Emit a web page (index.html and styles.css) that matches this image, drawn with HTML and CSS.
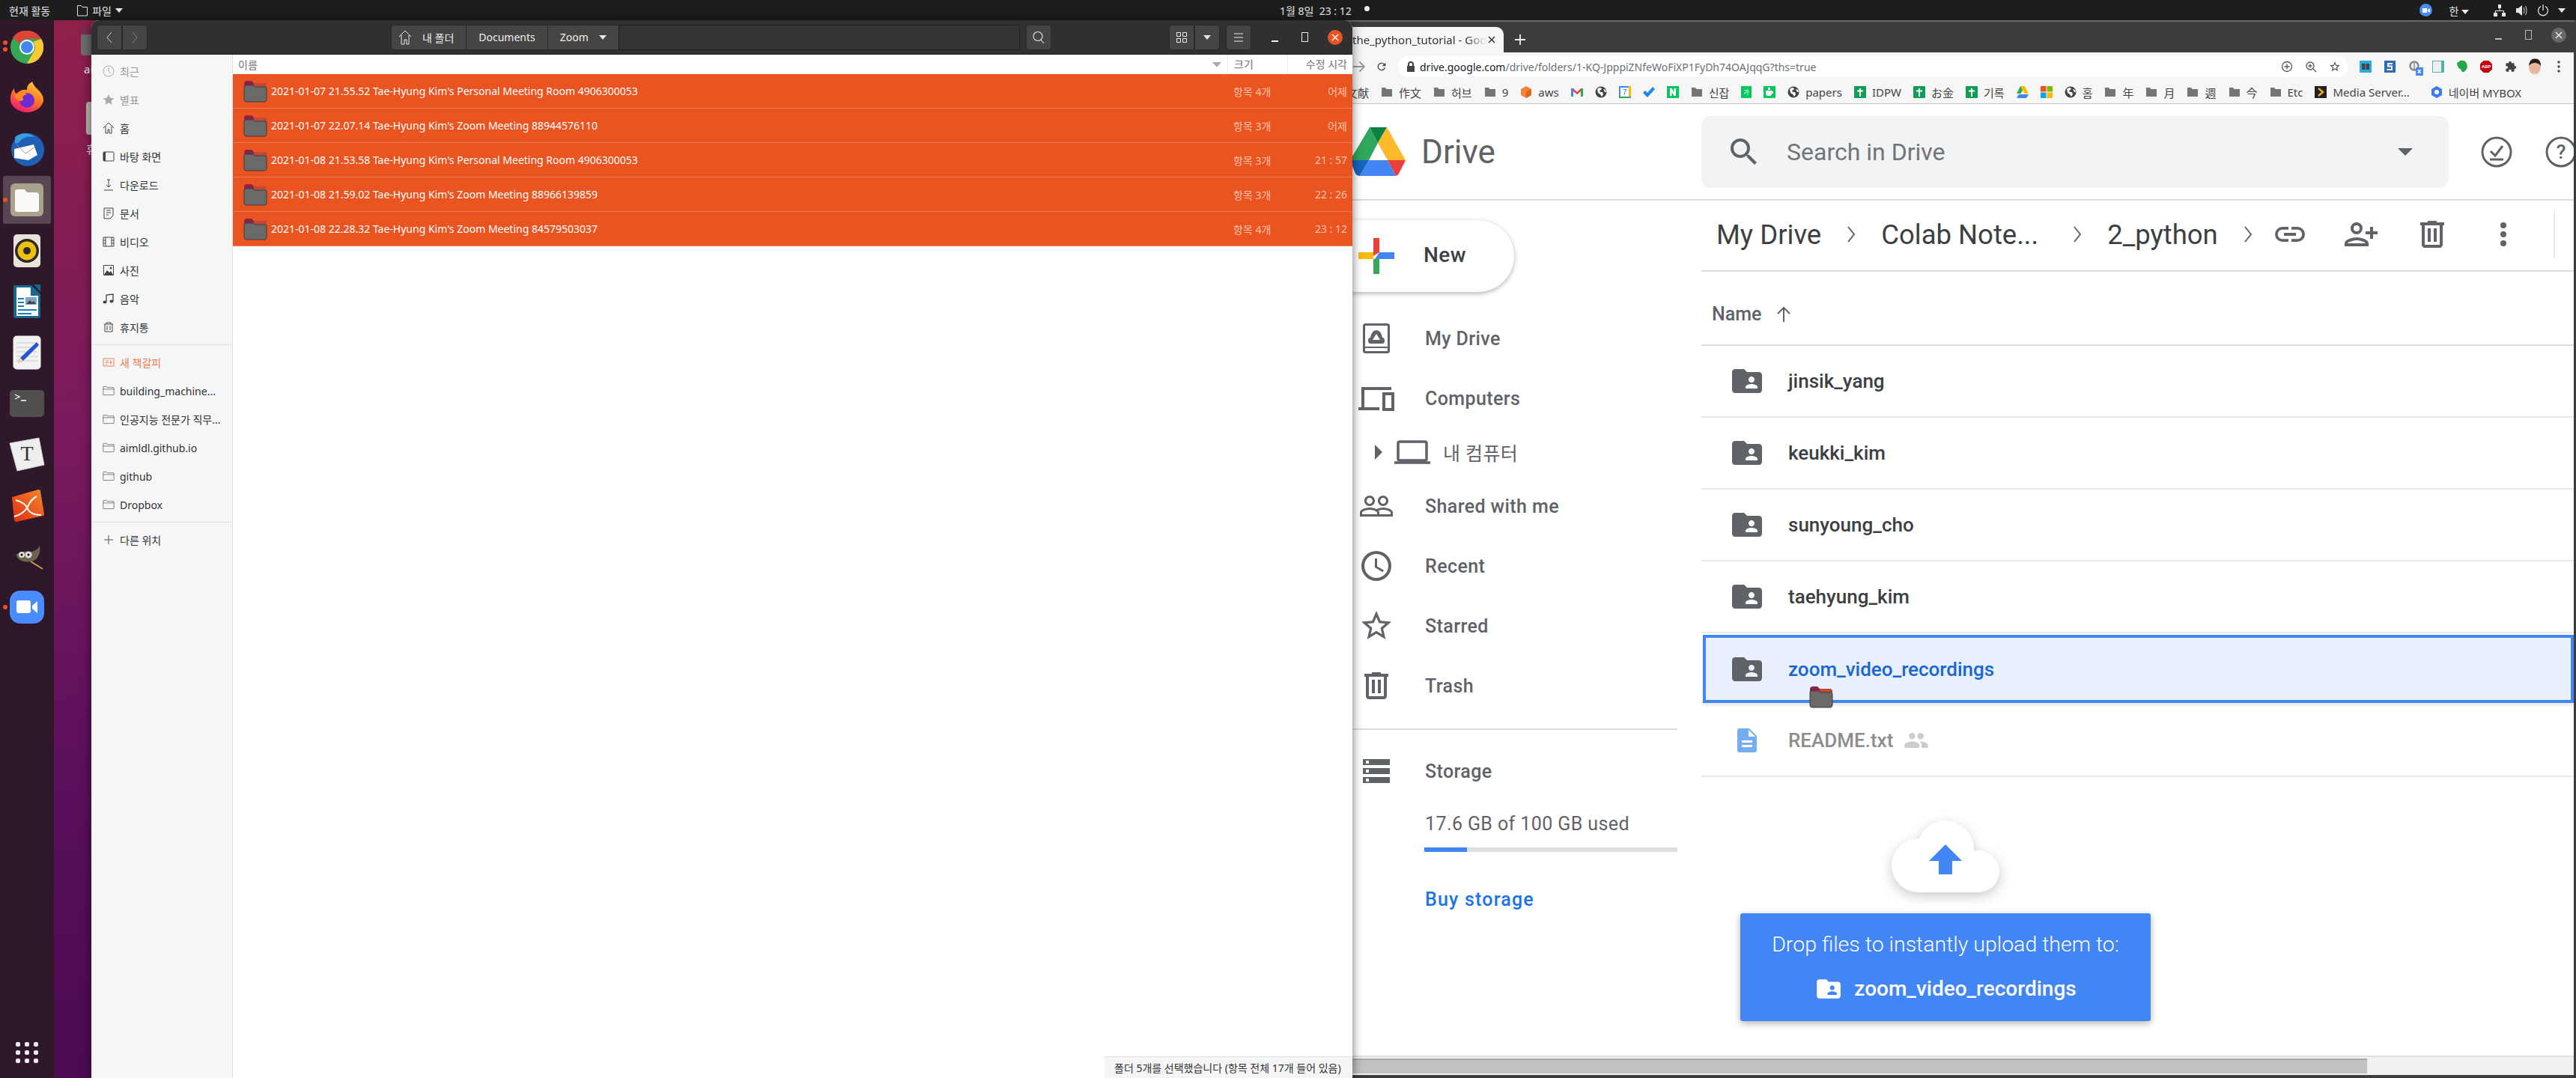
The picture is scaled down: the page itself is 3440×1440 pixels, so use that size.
FILE: index.html
```html
<!DOCTYPE html>
<html lang="ko">
<head>
    <meta charset="UTF-8">
    <title>Desktop</title>
    <link rel="stylesheet" href="styles.css">
</head>
<body>

<svg class="defs" width="0" height="0">
    <symbol id="bm-folder" viewBox="0 0 16 16"><path d="M1 2h5l1.5 2H15v10H1z"/></symbol>
    <symbol id="bm-globe" viewBox="0 0 16 16"><circle cx="8" cy="8" r="7.5" fill="#444"/><path d="M3 4l3-2 3 1-1 2-2 1 1 2 3 0 1 3-2 3-2-3-3-2zM11 4l3 1 1 3-2 0z" fill="#fff"/></symbol>
    <symbol id="bm-cross" viewBox="0 0 16 16"><rect width="16" height="16" rx="1" fill="#0f9d58"/><path d="M7 3h2v2.500h3v2H9V14H7V7.500H4v-2h3z" fill="#fff"/></symbol>
    <symbol id="g-folder" viewBox="0 0 32 30"><path d="M1 5q0-4 4-4h6l3 3h13q4 0 4 4v4H1z" fill="#8c2347"/><path d="M14 4h13q4 0 4 4v2H14z" fill="#c04a35"/><path d="M1 9q0-2 2-2h10l2 2h14q2 0 2 2v15q0 3-3 3H4q-3 0-3-3z" fill="#6b6a69" stroke="#3f3d3c"/></symbol>
    <symbol id="f-folder" viewBox="0 0 30 24"><path d="M1.5 21V3q0-1.500 1.500-1.500h7l2 2.500h15q1.500 0 1.500 1.500V21q0 1.500-1.500 1.500H3q-1.500 0-1.500-1.500zM1.500 8h27" fill="none" stroke="#444" stroke-width="1.200"/></symbol>
    <symbol id="shared" viewBox="0 0 24 24"><path d="M20 6h-8l-2-2H4c-1.100 0-1.990.900-1.990 2L2 18c0 1.100.900 2 2 2h16c1.100 0 2-.900 2-2V8c0-1.100-.900-2-2-2zm-5 3c1.100 0 2 .900 2 2s-.900 2-2 2-2-.900-2-2 .900-2 2-2zm4 8h-8v-1c0-1.330 2.670-2 4-2s4 .670 4 2v1z"/></symbol>
</svg>

<header class="topbar">
    <div class="topbar-left">
        <span>현재 활동</span>
        <span class="app-menu">
            <svg width="16" height="18" viewBox="0 0 16 18"><path d="M1.5 16V2.500h5l1.500 2h6.500V16z" fill="none" stroke="#ddd"/></svg>
            파일 <i class="caret"></i>
        </span>
    </div>
    <div class="clock">1월 8일&nbsp; 23 : 12 <b class="clock-dot"></b></div>
    <div class="tray">
        <span class="tray-zoom"><svg width="10" height="10" viewBox="0 0 10 10"><path d="M0 2h6v6H0zM7 4l3-2v6L7 6z" fill="#fff"/></svg></span>
        <span class="tray-ime">한 <i class="caret"></i></span>
        <svg width="18" height="18" viewBox="0 0 18 18"><path d="M7 1h4v5H7zM1 12h5v5H1zM12 12h5v5h-5zM8.500 6h1v3H15v3h-1v-2H4v2H3V9h5.500z" fill="#e6e6e6"/></svg>
        <svg width="17" height="18" viewBox="0 0 17 18"><path d="M1 6h3l5-4v14l-5-4H1z" fill="#e6e6e6"/><path d="M11 5q2 4 0 8M13.500 3q3 6 0 12" fill="none" stroke="#aaa" stroke-width="1.300"/></svg>
        <svg width="16" height="18" viewBox="0 0 16 18"><path d="M5 3.500a6.500 6.500 0 1 0 6 0M8 1v8" fill="none" stroke="#e6e6e6" stroke-width="1.300"/></svg>
        <i class="caret"></i>
    </div>
</header>

<div class="desktop">
    <nav class="dock">
        <span class="dock-item running-2">
            <svg width="44" height="44" viewBox="0 0 44 44">
                <circle cx="22" cy="22" r="22" fill="#34a853"/>
                <path d="M22 0a22 22 0 0 1 19.100 11H22a11 11 0 0 0-10 6.500L3 9A22 22 0 0 1 22 0z" fill="#db4437"/>
                <path d="M41.100 11A22 22 0 0 1 22 44l9.500-16.500A11 11 0 0 0 30 15z" fill="#fcc934"/>
                <circle cx="22" cy="22" r="10" fill="#fff"/><circle cx="22" cy="22" r="8" fill="#4285f4"/>
            </svg>
        </span>
        <span class="dock-item">
            <svg width="46" height="46" viewBox="0 0 46 46">
                <defs><linearGradient id="ff" x1="0.8" y1="0" x2="0.3" y2="1"><stop offset="0" stop-color="#ffd23f"/><stop offset="0.5" stop-color="#ff7a1f"/><stop offset="1" stop-color="#f0147a"/></linearGradient></defs>
                <path d="M30 1q2 6 8 11 8 8 7 15a22.500 19 0 0 1-44 0q-1-10 5-17 0 6 3 7 6-6 14-5-1-6 7-11z" fill="url(#ff)"/>
                <circle cx="23" cy="26" r="10" fill="#6d2bd0"/><path d="M6 20q8-8 18-2-5 0-7 4 3 4-2 5-6-1-9-7z" fill="#ff8a22"/>
            </svg>
        </span>
        <span class="dock-item">
            <svg width="48" height="48" viewBox="0 0 48 48">
                <circle cx="25" cy="25" r="22" fill="#1f5fb4"/><path d="M8 8q14-10 26 0-12-2-18 4-4 6-8 4z" fill="#3a9ce0"/>
                <path d="M7 24l26-6 5 14-12 7-19-3z" fill="#fff"/><path d="M10 18l12 12 12-8" fill="none" stroke="#999"/>
            </svg>
        </span>
        <span class="dock-item is-active running-1">
            <svg width="44" height="44" viewBox="0 0 44 44">
                <rect width="44" height="44" rx="6" fill="#a9a28c"/>
                <path d="M6 11q0-3 3-3h10l3 4h12q4 0 4 3v20q0 3-3 3H9q-3 0-3-3z" fill="#fbfaf8"/>
            </svg>
        </span>
        <span class="dock-item">
            <svg width="38" height="46" viewBox="0 0 38 46">
                <rect x="1" y="1" width="36" height="44" rx="5" fill="#e8e4da"/>
                <circle cx="19" cy="23" r="16" fill="#2c2b2a"/><circle cx="19" cy="23" r="12.500" fill="#edc10f"/><circle cx="19" cy="23" r="5" fill="#2c2b2a"/>
            </svg>
        </span>
        <span class="dock-item">
            <svg width="38" height="46" viewBox="0 0 38 46">
                <path d="M3 1h22l12 12v29q0 3-3 3H4q-3 0-3-3V3q0-2 2-2z" fill="#18688e"/>
                <path d="M5 4h19v11h10v27H5z" fill="#fff"/><path d="M28 0h9v10z" fill="#18688e"/>
                <path d="M7 18h8v2H7zM7 23h8v2H7zM7 28h8v2H7zM7 33h25v2H7zM7 38h18v2H7z" fill="#1a7fb8"/>
                <rect x="17" y="17" width="15" height="10" fill="#7da6c4"/><path d="M18 26l5-5 3 3 2-2 3 4z" fill="#444"/>
            </svg>
        </span>
        <span class="dock-item">
            <svg width="38" height="46" viewBox="0 0 38 46">
                <rect x="0.5" y="0.5" width="37" height="45" rx="5" fill="#f2f2f2"/>
                <path d="M5 10h28M5 16h28M5 22h28M5 28h28M5 34h28" stroke="#ccc"/>
                <path d="M32 9l3 4-21 21-7 3 3-7z" fill="#2456d6"/><path d="M10 30l4 4-7 3z" fill="#f6d6b0"/>
            </svg>
        </span>
        <span class="dock-item">
            <svg width="46" height="36" viewBox="0 0 46 36">
                <rect width="46" height="36" rx="5" fill="#504f4d"/>
                <path d="M7 6l6 3-6 3" fill="none" stroke="#fff" stroke-width="1.300"/><path d="M15 14h7" stroke="#fff" stroke-width="1.500"/>
            </svg>
        </span>
        <span class="dock-item">
            <svg width="48" height="46" viewBox="0 0 48 46">
                <path d="M1 8l39-7 7 36-36 8z" fill="#eee" stroke="#ccc"/>
                <text x="24" y="31" class="dock-t">T</text>
            </svg>
        </span>
        <span class="dock-item">
            <svg width="46" height="46" viewBox="0 0 46 46">
                <defs><linearGradient id="xm" x1="1" y1="0" x2="0" y2="1"><stop offset="0" stop-color="#f58a2a"/><stop offset="1" stop-color="#e32a12"/></linearGradient></defs>
                <path d="M3 12l35-10q3 0 3 2l5 31q0 2-2 2L9 45q-2 0-3-2z" fill="url(#xm)"/>
                <path d="M8 16q14 4 16 12 4 8 18 8M36 11q-8 4-12 14-6 10-18 13" fill="none" stroke="#fff" stroke-width="2"/>
            </svg>
        </span>
        <span class="dock-item">
            <svg width="46" height="40" viewBox="0 0 46 40">
                <path d="M8 18q10-6 18-4 10 0 14-8 2 14-8 20-12 4-20-2z" fill="#6d6450"/>
                <ellipse cx="5" cy="21" rx="4" ry="3.5" fill="#222"/>
                <circle cx="16" cy="18" r="4" fill="#ddd"/><circle cx="25" cy="18" r="4.5" fill="#ddd"/><circle cx="16" cy="18" r="1.5"/><circle cx="25" cy="18" r="1.5"/>
                <path d="M28 27l16 10" stroke="#c9a04a" stroke-width="2"/>
            </svg>
        </span>
        <span class="dock-item running-1">
            <svg width="46" height="44" viewBox="0 0 46 44">
                <rect width="46" height="44" rx="14" fill="#4a8cff"/>
                <rect x="9" y="13" width="19" height="17" rx="3" fill="#fff"/><path d="M30 20l7-6v16l-7-6z" fill="#fff"/>
            </svg>
        </span>
        <span class="dock-grid"><i></i><i></i><i></i><i></i><i></i><i></i><i></i><i></i><i></i></span>
    </nav>

    <div class="desk-icon desk-icon-a"><span class="desk-shape"></span><span class="desk-label">ai</span></div>
    <div class="desk-icon desk-icon-b"><span class="desk-shape"></span><span class="desk-label">휴</span></div>

    <section class="chrome">
        <div class="chrome-title">
            <div class="tab">
                <span class="tab-text">the_python_tutorial - Goo</span>
                <svg class="tab-close" width="10" height="10" viewBox="0 0 10 10"><path d="M1 1l8 8M9 1l-8 8" stroke="#333" stroke-width="1.5"/></svg>
            </div>
            <svg class="new-tab" width="14" height="14" viewBox="0 0 14 14"><path d="M7 0v14M0 7h14" stroke="#eee" stroke-width="1.8"/></svg>
            <div class="win-btns">
                <i class="win-min"></i><i class="win-max"></i>
                <span class="win-close win-close-grey"><svg width="10" height="10" viewBox="0 0 10 10"><path d="M1 1l8 8M9 1l-8 8" stroke="#eee" stroke-width="1.4"/></svg></span>
            </div>
        </div>
        <div class="chrome-toolbar">
            <svg width="18" height="16" viewBox="0 0 18 16"><path d="M1 8h15M9.500 1.500L16 8l-6.500 6.500" fill="none" stroke="#999" stroke-width="1.8"/></svg>
            <svg class="reload" width="16" height="16" viewBox="0 0 24 24"><path d="M17.650 6.350A7.960 7.960 0 0 0 12 4a8 8 0 1 0 7.730 10h-2.080A6 6 0 1 1 12 6c1.660 0 3.140.690 4.220 1.780L13 11h7V4z" fill="#444"/></svg>
            <div class="omnibox">
                <svg width="12" height="14" viewBox="0 0 12 14"><path d="M2 6V4a4 4 0 0 1 8 0v2h1v8H1V6zm2 0h4V4a2 2 0 0 0-4 0z" fill="#444"/></svg>
                <span class="url"><b>drive.google.com</b>/drive/folders/1-KQ-JpppiZNfeWoFiXP1FyDh74OAJqqG?ths=true</span>
                <span class="omni-icons">
                    <svg width="16" height="16" viewBox="0 0 16 16"><circle cx="8" cy="8" r="6.5" fill="none" stroke="#555" stroke-width="1.3"/><path d="M8 4.500v7M4.500 8h7" stroke="#555" stroke-width="1.3"/></svg>
                    <svg width="16" height="16" viewBox="0 0 16 16"><circle cx="7" cy="7" r="5" fill="none" stroke="#555" stroke-width="1.3"/><path d="M11 11l4 4M7 4.500v5M4.500 7h5" stroke="#555" stroke-width="1.3"/></svg>
                    <svg width="16" height="16" viewBox="0 0 24 24"><path d="M22 9.240l-7.190-.620L12 2 9.190 8.630 2 9.240l5.460 4.730L5.820 21 12 17.270 18.180 21l-1.630-7.030L22 9.240zM12 15.400l-3.760 2.270 1-4.280-3.320-2.880 4.380-.380L12 6.100l1.710 4.040 4.380.380-3.320 2.880 1 4.280L12 15.400z" fill="#444"/></svg>
                </span>
            </div>
            <div class="extensions">
                <svg width="16" height="16" viewBox="0 0 16 16"><rect width="16" height="16" rx="1" fill="#29abe2"/><path d="M3 4h4l1 1 1-1h4v8H3z" fill="#444"/><path d="M8 5v7" stroke="#29abe2"/></svg>
                <svg width="15" height="16" viewBox="0 0 15 16"><rect width="15" height="16" fill="#2a6db5"/><path d="M11 4H5v3.500h5V12H3.500" fill="none" stroke="#fff" stroke-width="2"/></svg>
                <span class="ext-x"><svg width="14" height="16" viewBox="0 0 14 16"><circle cx="7" cy="7" r="5.5" fill="none" stroke="#888" stroke-width="2.5"/><path d="M7 3v9" stroke="#888" stroke-width="1.5"/></svg><b>x</b></span>
                <svg width="16" height="16" viewBox="0 0 16 16"><rect width="16" height="16" fill="#4db6ac"/><rect x="1" y="1" width="11" height="14" fill="#eee"/></svg>
                <svg width="16" height="18" viewBox="0 0 16 18"><path d="M1 4q3-1 4-3 6-1 8 2 3 6 1 9-3 5-6 4-2-2-1-3-5-1-6-9z" fill="#20a849"/></svg>
                <svg width="16" height="16" viewBox="0 0 16 16"><path d="M4.500 0h7L16 4.500v7L11.500 16h-7L0 11.500v-7z" fill="#c5000b"/><text x="8" y="10" class="abp">ABP</text></svg>
                <svg width="16" height="16" viewBox="0 0 24 24"><path d="M20.500 11H19V7a2 2 0 0 0-2-2h-4V3.500a2.500 2.500 0 0 0-5 0V5H4a2 2 0 0 0-2 2v3.800h1.500a2.700 2.700 0 0 1 0 5.400H2V20a2 2 0 0 0 2 2h3.800v-1.500a2.700 2.700 0 0 1 5.400 0V22H17a2 2 0 0 0 2-2v-4h1.500a2.500 2.500 0 0 0 0-5z" fill="#444"/></svg>
                <svg width="18" height="22" viewBox="0 0 18 22"><ellipse cx="9" cy="11" rx="8" ry="10.500" fill="#e8b79a"/><path d="M1 10Q2 0 9 .5q8-.5 8 9.500-3-4-8-4T1 10z" fill="#2a1c18"/><path d="M4 21.500q5-4 10 0z" fill="#ddd"/></svg>
                <svg width="4" height="16" viewBox="0 0 4 16"><circle cx="2" cy="2" r="1.7" fill="#444"/><circle cx="2" cy="8" r="1.7" fill="#444"/><circle cx="2" cy="14" r="1.7" fill="#444"/></svg>
            </div>
        </div>
        <div class="bookmarks">
            <span class="bm"><svg class="bm-ic"><use href="#bm-folder"/></svg>文献</span>
            <span class="bm"><svg class="bm-ic"><use href="#bm-folder"/></svg>作文</span>
            <span class="bm"><svg class="bm-ic"><use href="#bm-folder"/></svg>허브</span>
            <span class="bm"><svg class="bm-ic"><use href="#bm-folder"/></svg>9</span>
            <span class="bm"><svg width="16" height="16" viewBox="0 0 16 16"><path d="M8 0l7 4v8l-7 4-7-4V4z" fill="#f58536"/><path d="M8 7l7-3v8l-7 4z" fill="#d9661f"/></svg>aws</span>
            <span class="bm"><svg width="16" height="16" viewBox="0 0 16 16"><path d="M0 3h3l5 5 5-5h3v11h-3V7L8 11 3 7v7H0z" fill="#ea4335"/><path d="M0 3h3v11H0z" fill="#4285f4"/><path d="M13 3h3v11h-3z" fill="#34a853"/></svg></span>
            <span class="bm"><svg class="bm-ic"><use href="#bm-globe"/></svg></span>
            <span class="bm"><svg width="16" height="16" viewBox="0 0 16 16"><rect width="16" height="16" fill="#4285f4"/><rect x="2" y="2" width="11" height="12" fill="#fff"/><path d="M0 14h13v2H0z" fill="#34a853"/><path d="M13 0h3v14h-3z" fill="#fbbc05"/><text x="7.5" y="12" class="cal">7</text></svg></span>
            <span class="bm"><svg width="16" height="16" viewBox="0 0 16 16"><path d="M0 9l3-3 3 3 7-8 3 3-10 11z" fill="#1e88e5"/></svg></span>
            <span class="bm"><svg width="16" height="16" viewBox="0 0 16 16"><rect width="16" height="16" fill="#03c75a"/><path d="M4 3h2.500l3 5V3H12v10H9.500l-3-5v5H4z" fill="#fff"/></svg></span>
            <span class="bm"><svg class="bm-ic"><use href="#bm-folder"/></svg>신잡</span>
            <span class="bm"><svg width="14" height="16" viewBox="0 0 14 16"><rect width="14" height="16" fill="#03c75a"/><text x="7" y="11" class="ga">가</text></svg></span>
            <span class="bm"><svg width="16" height="16" viewBox="0 0 16 16"><rect width="16" height="16" fill="#03c75a"/><path d="M3 6h8v4q0 3-3 3H6q-3 0-3-3zM11 7h2v3h-2zM6 2h3v3H6z" fill="#fff"/></svg></span>
            <span class="bm"><svg class="bm-ic"><use href="#bm-globe"/></svg>papers</span>
            <span class="bm"><svg class="bm-ic"><use href="#bm-cross"/></svg>IDPW</span>
            <span class="bm"><svg class="bm-ic"><use href="#bm-cross"/></svg>お金</span>
            <span class="bm"><svg class="bm-ic"><use href="#bm-cross"/></svg>기록</span>
            <span class="bm"><svg width="16" height="16" viewBox="0 0 16 16"><path d="M5 0h6L5.500 10H0z" fill="#34a853"/><path d="M5 0h6l5 10h-5.500z" fill="#fbbc05"/><path d="M3 11h13l-3 5H0z" fill="#4285f4"/></svg></span>
            <span class="bm"><svg width="16" height="16" viewBox="0 0 16 16"><path d="M0 0h7.500v7.500H0z" fill="#f25022"/><path d="M8.500 0H16v7.500H8.500z" fill="#7fba00"/><path d="M0 8.500h7.500V16H0z" fill="#00a4ef"/><path d="M8.500 8.500H16V16H8.500z" fill="#ffb900"/></svg></span>
            <span class="bm"><svg class="bm-ic"><use href="#bm-globe"/></svg>홈</span>
            <span class="bm"><svg class="bm-ic"><use href="#bm-folder"/></svg>年</span>
            <span class="bm"><svg class="bm-ic"><use href="#bm-folder"/></svg>月</span>
            <span class="bm"><svg class="bm-ic"><use href="#bm-folder"/></svg>週</span>
            <span class="bm"><svg class="bm-ic"><use href="#bm-folder"/></svg>今</span>
            <span class="bm"><svg class="bm-ic"><use href="#bm-folder"/></svg>Etc</span>
            <span class="bm"><svg width="16" height="16" viewBox="0 0 16 16"><rect width="16" height="16" fill="#222"/><path d="M5 3l6 5-6 5" fill="none" stroke="#f5a623" stroke-width="2.5"/></svg>Media Server...</span>
            <span class="bm bm-naver"><svg width="16" height="16" viewBox="0 0 16 16"><path d="M8 0l7 4v8l-7 4-7-4V4z" fill="#3b7bf0"/><circle cx="8" cy="8" r="3" fill="#fff"/></svg>네이버 MYBOX</span>
        </div>

        <div class="drive">
            <div class="drive-top">
                <div class="brand">
                    <svg width="74" height="65" viewBox="0 0 74 65">
                        <path d="M26 0h23L37 21z" fill="#0d8043"/>
                        <path d="M26 0l11 21-12 23H0z" fill="#2fa85e"/>
                        <path d="M49 0l25 44H50L37 21z" fill="#fdba2c"/>
                        <path d="M0 44h25L13 65q-4 0-6-3z" fill="#1565c0"/>
                        <path d="M25 44h25l11 21H13z" fill="#4285f4"/>
                        <path d="M50 44h24l-9 18q-2 3-4 3z" fill="#ea3d3d"/>
                    </svg>
                    <span class="brand-name">Drive</span>
                </div>
                <div class="searchbox">
                    <svg class="search-ic" width="48" height="48" viewBox="0 0 24 24"><path d="M15.500 14h-.790l-.280-.270A6.470 6.470 0 0 0 16 9.500 6.500 6.500 0 1 0 9.500 16c1.610 0 3.090-.590 4.230-1.570l.270.280v.790l5 4.990L20.490 19l-4.990-5zm-6 0C7.010 14 5 11.990 5 9.500S7.010 5 9.500 5 14 7.010 14 9.500 11.990 14 9.500 14z" fill="#5f6368"/></svg>
                    <span class="search-text">Search in Drive</span>
                    <i class="search-drop"></i>
                </div>
                <div class="top-actions">
                    <svg width="44" height="44" viewBox="0 0 44 44"><circle cx="22" cy="22" r="19" fill="none" stroke="#5f6368" stroke-width="3"/><path d="M14 21l6 6 10-13M13 32h18" fill="none" stroke="#5f6368" stroke-width="3"/></svg>
                    <svg width="44" height="44" viewBox="0 0 44 44"><circle cx="22" cy="22" r="19" fill="none" stroke="#5f6368" stroke-width="3"/><text x="22" y="31" class="help">?</text></svg>
                </div>
            </div>
            <div class="drive-body">
                <aside class="drive-side">
                    <div class="new-btn">
                        <svg width="48" height="48" viewBox="0 0 48 48">
                            <path d="M20 0h8v19l-8 5z" fill="#ea4335"/><path d="M0 19h20v9H0z" fill="#fbbc05"/>
                            <path d="M28 19h20v9H22z" fill="#4285f4"/><path d="M20 28h8v20h-8z" fill="#34a853"/>
                        </svg>
                        <span class="new-label">New</span>
                    </div>
                    <div class="nav-item">
                        <svg class="nav-ic" viewBox="0 0 48 48"><rect x="7.500" y="5.500" width="33" height="37" rx="2" fill="none" stroke="#5f6368" stroke-width="3"/><path d="M7 36h34" stroke="#5f6368" stroke-width="2"/><path d="M13 27q0-4 3-4 2-10 8-10t8 10q3 0 3 4t-3 4H16q-3 0-3-4z" fill="#5f6368"/><path d="M24 18l5 8H19z" fill="#fff"/></svg>
                        My Drive
                    </div>
                    <div class="nav-item">
                        <svg class="nav-ic" viewBox="0 -6 48 48"><path d="M6 32V5h38M0 32h28" fill="none" stroke="#5f6368" stroke-width="4"/><rect x="34" y="12" width="12" height="21" fill="none" stroke="#5f6368" stroke-width="4"/></svg>
                        Computers
                    </div>
                    <div class="nav-item nav-sub">
                        <i class="sub-arrow"></i>
                        <svg class="sub-ic" width="48" height="32" viewBox="0 0 48 32"><rect x="5" y="2" width="38" height="25" rx="2" fill="none" stroke="#5f6368" stroke-width="3.5"/><path d="M0 30h48" stroke="#5f6368" stroke-width="3.5"/></svg>
                        내 컴퓨터
                    </div>
                    <div class="nav-item">
                        <svg class="nav-ic" viewBox="0 0 24 24"><path d="M16.500 13c-1.200 0-3.070.340-4.500 1-1.430-.670-3.300-1-4.500-1C5.330 13 1 14.080 1 16.250V19h22v-2.750c0-2.170-4.330-3.250-6.500-3.250zm-4 4.500h-10v-1.250c0-.540 2.560-1.750 5-1.750s5 1.210 5 1.750v1.250zm9 0H14v-1.250c0-.460-.200-.860-.520-1.220.880-.300 1.960-.530 3.020-.530 2.440 0 5 1.210 5 1.750v1.250zM7.500 12c1.930 0 3.500-1.570 3.500-3.500S9.430 5 7.500 5 4 6.570 4 8.500 5.570 12 7.500 12zm0-5.500c1.100 0 2 .900 2 2s-.900 2-2 2-2-.900-2-2 .900-2 2-2zm9 5.500c1.930 0 3.500-1.570 3.500-3.500S18.430 5 16.500 5 13 6.570 13 8.500s1.570 3.500 3.500 3.500zm0-5.500c1.100 0 2 .900 2 2s-.900 2-2 2-2-.900-2-2 .900-2 2-2z" fill="#5f6368"/></svg>
                        Shared with me
                    </div>
                    <div class="nav-item">
                        <svg class="nav-ic" viewBox="0 0 24 24"><path d="M12 2a10 10 0 1 0 0 20 10 10 0 0 0 0-20zm0 18a8 8 0 1 1 0-16 8 8 0 0 1 0 16zm.500-13H11v6l5.250 3.150.750-1.230-4.500-2.670z" fill="#5f6368"/></svg>
                        Recent
                    </div>
                    <div class="nav-item">
                        <svg class="nav-ic" viewBox="0 0 24 24"><path d="M22 9.240l-7.190-.620L12 2 9.190 8.630 2 9.240l5.460 4.730L5.820 21 12 17.270 18.180 21l-1.630-7.030L22 9.240zM12 15.400l-3.760 2.270 1-4.280-3.320-2.880 4.380-.380L12 6.100l1.710 4.040 4.380.380-3.320 2.880 1 4.280L12 15.400z" fill="#5f6368"/></svg>
                        Starred
                    </div>
                    <div class="nav-item">
                        <svg class="nav-ic" viewBox="0 0 24 24"><path d="M15 4V3H9v1H4v2h1v13c0 1.100.900 2 2 2h10c1.100 0 2-.900 2-2V6h1V4h-5zm2 15H7V6h10v13zM9 8h2v9H9zm4 0h2v9h-2z" fill="#5f6368"/></svg>
                        Trash
                    </div>
                    <div class="side-sep"></div>
                    <div class="nav-item">
                        <svg class="nav-ic" viewBox="0 0 24 24"><path d="M3 20h18v-4H3v4zm2-3h2v2H5v-2zM3 4v4h18V4H3zm4 3H5V5h2v2zm-4 7h18v-4H3v4zm2-3h2v2H5v-2z" fill="#5f6368"/></svg>
                        Storage
                    </div>
                    <div class="usage">17.6 GB of 100 GB used</div>
                    <div class="usage-bar"><div class="usage-fill" style="width:17%"></div></div>
                    <div class="buy">Buy storage</div>
                </aside>
                <main class="drive-main">
                    <div class="crumbs">
                        <span class="crumb">My Drive</span>
                        <svg class="chev" width="12" height="24" viewBox="0 0 12 24"><path d="M2 2l8 10-8 10" fill="none" stroke="#5f6368" stroke-width="2"/></svg>
                        <span class="crumb crumb-long">Colab Note...</span>
                        <svg class="chev" width="12" height="24" viewBox="0 0 12 24"><path d="M2 2l8 10-8 10" fill="none" stroke="#5f6368" stroke-width="2"/></svg>
                        <span class="crumb">2_python</span>
                        <svg class="chev chev-last" width="12" height="24" viewBox="0 0 12 24"><path d="M2 2l8 10-8 10" fill="none" stroke="#5f6368" stroke-width="2"/></svg>
                        <div class="crumb-tools">
                            <svg width="48" height="48" viewBox="0 0 24 24"><path d="M3.900 12c0-1.710 1.390-3.100 3.100-3.100h4V7H7a5 5 0 0 0 0 10h4v-1.900H7c-1.710 0-3.100-1.390-3.100-3.100zM8 13h8v-2H8v2zm9-6h-4v1.900h4c1.710 0 3.100 1.390 3.100 3.100s-1.390 3.100-3.100 3.100h-4V17h4a5 5 0 0 0 0-10z" fill="#5f6368"/></svg>
                            <svg width="48" height="48" viewBox="0 0 24 24"><path d="M15 12a4 4 0 1 0-4-4 4 4 0 0 0 4 4zm0-6a2 2 0 1 1-2 2 2 2 0 0 1 2-2zM15 14c-2.670 0-8 1.340-8 4v2h16v-2c0-2.660-5.330-4-8-4zm-6 4c.220-.720 3.310-2 6-2s5.800 1.290 6 2zM6 10V7H4v3H1v2h3v3h2v-3h3v-2z" fill="#5f6368" transform="matrix(-1 0 0 1 24 0)"/></svg>
                            <svg width="48" height="48" viewBox="0 0 24 24"><path d="M15 4V3H9v1H4v2h1v13c0 1.100.900 2 2 2h10c1.100 0 2-.900 2-2V6h1V4h-5zm2 15H7V6h10v13zM9 8h2v9H9zm4 0h2v9h-2z" fill="#5f6368"/></svg>
                            <svg width="48" height="48" viewBox="0 0 24 24"><path d="M12 8a2 2 0 1 0-2-2 2 2 0 0 0 2 2zm0 2a2 2 0 1 0 2 2 2 2 0 0 0-2-2zm0 6a2 2 0 1 0 2 2 2 2 0 0 0-2-2z" fill="#5f6368"/></svg>
                            <i class="tools-line"></i>
                        </div>
                    </div>
                    <div class="list-head">Name
                        <svg width="24" height="24" viewBox="0 0 24 24"><path d="M12 22V3M4 11l8-8 8 8" fill="none" stroke="#5f6368" stroke-width="2"/></svg>
                    </div>
                    <div class="row"><svg class="row-ic"><use href="#shared"/></svg>jinsik_yang</div>
                    <div class="row"><svg class="row-ic"><use href="#shared"/></svg>keukki_kim</div>
                    <div class="row"><svg class="row-ic"><use href="#shared"/></svg>sunyoung_cho</div>
                    <div class="row"><svg class="row-ic"><use href="#shared"/></svg>taehyung_kim</div>
                    <div class="row row-selected"><svg class="row-ic"><use href="#shared"/></svg>zoom_video_recordings</div>
                    <div class="row row-muted">
                        <svg class="row-doc" width="26" height="32" viewBox="0 0 26 32"><path d="M3 0h13l10 10v19q0 3-3 3H3q-3 0-3-3V3q0-3 3-3z" fill="#76acf2"/><path d="M15 2v9h9z" fill="#fff"/><path d="M6 16h14v3H6zM6 22h14v3H6z" fill="#fff"/></svg>
                        README.txt
                        <svg class="row-people" width="34" height="34" viewBox="0 0 24 24"><path d="M16 11c1.660 0 2.990-1.340 2.990-3S17.660 5 16 5c-1.660 0-3 1.340-3 3s1.340 3 3 3zm-8 0c1.660 0 2.990-1.340 2.990-3S9.660 5 8 5C6.340 5 5 6.340 5 8s1.340 3 3 3zm0 2c-2.330 0-7 1.170-7 3.500V19h14v-2.500c0-2.330-4.670-3.500-7-3.500zm8 0c-.290 0-.620.020-.970.050 1.160.840 1.970 1.970 1.970 3.450V19h6v-2.500c0-2.330-4.670-3.500-7-3.500z" fill="#ccc"/></svg>
                    </div>
                    <svg class="drag-folder"><use href="#g-folder"/></svg>
                    <div class="drop-hint">
                        <svg class="drop-cloud" width="144" height="96" viewBox="0 0 144 96">
                            <g fill="#fff"><circle cx="36" cy="60" r="36"/><circle cx="72" cy="38" r="38"/><circle cx="116" cy="68" r="28"/><rect x="36" y="56" width="80" height="40"/></g>
                            <path d="M72 32l22 22H81v18H63V54H50z" fill="#4285f4"/>
                        </svg>
                        <div class="drop-box">
                            <div class="drop-line">Drop files to instantly upload them to:</div>
                            <div class="drop-target"><svg width="38" height="38"><use href="#shared"/></svg>zoom_video_recordings</div>
                        </div>
                    </div>
                </main>
            </div>
        </div>
        <div class="hscroll"><div class="hscroll-thumb"></div></div>
    </section>

    <section class="files">
        <div class="files-head">
            <div class="btn-group">
                <span class="hbtn"><svg width="8" height="16" viewBox="0 0 8 16"><path d="M7 1L1 8l6 7" fill="none" stroke="#ccc"/></svg></span>
                <span class="hbtn"><svg width="8" height="16" viewBox="0 0 8 16"><path d="M1 1l6 7-6 7" fill="none" stroke="#888"/></svg></span>
            </div>
            <div class="pathbar">
                <span class="crumb-file"><svg width="18" height="20" viewBox="0 0 18 20"><path d="M1 9l8-8 8 8M4 7v12h4v-6h3v6h3V7" fill="none" stroke="#eee"/></svg>내 폴더</span>
                <span class="crumb-file">Documents</span>
                <span class="crumb-file">Zoom <i class="caret"></i></span>
                <span class="path-rest"></span>
            </div>
            <span class="hbtn hbtn-search"><svg width="18" height="18" viewBox="0 0 18 18"><circle cx="8" cy="7.5" r="6" fill="none" stroke="#ddd" stroke-width="1.2"/><path d="M12 12l4 5" stroke="#ddd" stroke-width="1.2"/></svg></span>
            <div class="btn-group btn-group-view">
                <span class="hbtn"><svg width="14" height="14" viewBox="0 0 14 14"><path d="M.5.5h5v5h-5zM8.500.5h5v5h-5zM.5 8.500h5v5h-5zM8.500 8.500h5v5h-5z" fill="none" stroke="#eee"/></svg></span>
                <span class="hbtn"><i class="caret"></i></span>
            </div>
            <span class="hbtn hbtn-menu"><svg width="12" height="12" viewBox="0 0 12 12"><path d="M0 1h12M0 6h12M0 11h12" stroke="#eee"/></svg></span>
            <div class="win-btns win-btns-files">
                <i class="win-min"></i><i class="win-max"></i>
                <span class="win-close"><svg width="10" height="10" viewBox="0 0 10 10"><path d="M1 1l8 8M9 1l-8 8" stroke="#fff" stroke-width="1.4"/></svg></span>
            </div>
        </div>
        <div class="files-body">
            <aside class="places">
                <div class="place place-dim"><svg class="pl-ic" viewBox="0 0 16 16"><circle cx="8" cy="8" r="7" fill="none" stroke="#aaa"/><path d="M8 3v5l3 3" fill="none" stroke="#aaa"/></svg>최근</div>
                <div class="place place-dim"><svg class="pl-ic" viewBox="0 0 16 16"><path d="M8 1l2.200 4.800 5 .6-3.700 3.400 1 5L8 12.300 3.500 14.800l1-5L.8 6.400l5-.6z" fill="#aaa"/></svg>별표</div>
                <div class="place"><svg class="pl-ic" viewBox="0 0 16 16"><path d="M1 8l7-7 7 7M4 6v9h3v-5h2v5h3V6" fill="none" stroke="#444"/></svg>홈</div>
                <div class="place"><svg class="pl-ic" viewBox="0 0 16 16"><rect x="1" y="2" width="14" height="12" rx="1" fill="none" stroke="#444"/><rect x="1" y="2" width="3" height="12" fill="#444"/></svg>바탕 화면</div>
                <div class="place"><svg class="pl-ic" viewBox="0 0 16 16"><path d="M8 1v10M5 8l3 3 3-3M6 1h4M2 15h12" fill="none" stroke="#444"/></svg>다운로드</div>
                <div class="place"><svg class="pl-ic" viewBox="0 0 16 16"><path d="M2 1h12v10l-4 4H2zM5 4h6M5 7h6M5 10h3" fill="none" stroke="#444"/></svg>문서</div>
                <div class="place"><svg class="pl-ic" viewBox="0 0 16 16"><path d="M1 2h14v12H1zM4 2v12M12 2v12M1 6h3M1 10h3M12 6h3M12 10h3" fill="none" stroke="#444"/></svg>비디오</div>
                <div class="place"><svg class="pl-ic" viewBox="0 0 16 16"><path d="M1.500 1.500h13v13h-13z" fill="none" stroke="#444"/><path d="M2 14l4-6 3 3 2-2 3 5z" fill="#444"/><circle cx="11" cy="5" r="1.5" fill="#444"/></svg>사진</div>
                <div class="place"><svg class="pl-ic" viewBox="0 0 16 16"><path d="M5 12V3l9-1v9" fill="none" stroke="#444" stroke-width="1.3"/><ellipse cx="3" cy="12.5" rx="2.5" ry="2" fill="#444"/><ellipse cx="12" cy="11.5" rx="2.5" ry="2" fill="#444"/></svg>음악</div>
                <div class="place"><svg class="pl-ic" viewBox="0 0 16 16"><path d="M2 4h12M5 4V2h6v2M3 4v10h10V4M6 6v6M10 6v6" fill="none" stroke="#444"/></svg>휴지통</div>
                <div class="places-sep"></div>
                <div class="place place-accent"><svg class="pl-ic pl-wide" viewBox="0 0 16 12"><path d="M1 1h14v10H1zM4 4h4M4 6.500h4M4 9h2M11 3v6M9 6h4" fill="none" stroke="#f0835b"/></svg>새 책갈피</div>
                <div class="place"><svg class="pl-ic pl-wide"><use href="#f-folder"/></svg>building_machine...</div>
                <div class="place"><svg class="pl-ic pl-wide"><use href="#f-folder"/></svg>인공지능 전문가 직무...</div>
                <div class="place"><svg class="pl-ic pl-wide"><use href="#f-folder"/></svg>aimldl.github.io</div>
                <div class="place"><svg class="pl-ic pl-wide"><use href="#f-folder"/></svg>github</div>
                <div class="place"><svg class="pl-ic pl-wide"><use href="#f-folder"/></svg>Dropbox</div>
                <div class="places-sep"></div>
                <div class="place"><svg class="pl-ic" viewBox="0 0 16 16"><path d="M8 2v12M2 8h12" stroke="#555"/></svg>다른 위치</div>
            </aside>
            <main class="file-list">
                <div class="cols">
                    <span class="col-name">이름 <i class="col-sort"></i></span>
                    <span class="col-size">크기</span>
                    <span class="col-time">수정 시각</span>
                </div>
                <div class="frow"><svg class="f-ic"><use href="#g-folder"/></svg><span class="col-name">2021-01-07 21.55.52 Tae-Hyung Kim's Personal Meeting Room 4906300053</span><span class="col-size">항목 4개</span><span class="col-time">어제</span></div>
                <div class="frow"><svg class="f-ic"><use href="#g-folder"/></svg><span class="col-name">2021-01-07 22.07.14 Tae-Hyung Kim's Zoom Meeting 88944576110</span><span class="col-size">항목 3개</span><span class="col-time">어제</span></div>
                <div class="frow"><svg class="f-ic"><use href="#g-folder"/></svg><span class="col-name">2021-01-08 21.53.58 Tae-Hyung Kim's Personal Meeting Room 4906300053</span><span class="col-size">항목 3개</span><span class="col-time">21 : 57</span></div>
                <div class="frow"><svg class="f-ic"><use href="#g-folder"/></svg><span class="col-name">2021-01-08 21.59.02 Tae-Hyung Kim's Zoom Meeting 88966139859</span><span class="col-size">항목 3개</span><span class="col-time">22 : 26</span></div>
                <div class="frow"><svg class="f-ic"><use href="#g-folder"/></svg><span class="col-name">2021-01-08 22.28.32 Tae-Hyung Kim's Zoom Meeting 84579503037</span><span class="col-size">항목 4개</span><span class="col-time">23 : 12</span></div>
                <div class="status">폴더 5개를 선택했습니다 (항목 전체 17개 들어 있음)</div>
            </main>
        </div>
    </section>
</div>

</body>
</html>
```

FILE: styles.css
```css
html, body {
    margin: 0;
    height: 100%;
    overflow: hidden;
}
body {
    display: flex;
    flex-direction: column;
    font-family: "Noto Sans", "Noto Sans CJK KR", sans-serif;
    background: #1d1d1d;
}
i { font-style: normal; }
.defs { position: absolute; }
.caret {
    display: inline-block;
    width: 0;
    height: 0;
    border-left: 5px solid transparent;
    border-right: 5px solid transparent;
    border-top: 6px solid #e6e6e6;
    vertical-align: middle;
}

/* top bar */
.topbar {
    height: 27px;
    flex: none;
    display: flex;
    align-items: center;
    justify-content: space-between;
    position: relative;
    background: #1d1d1d;
    color: #e6e6e6;
    font-size: 14px;
}
.topbar-left {
    display: flex;
    align-items: center;
    gap: 35px;
    padding-left: 12px;
}
.app-menu {
    display: flex;
    align-items: center;
    gap: 5px;
}
.clock {
    position: absolute;
    left: 1709px;
    display: flex;
    align-items: center;
    gap: 4px;
    white-space: pre;
}
.clock-dot {
    width: 7px;
    height: 7px;
    margin-left: 10px;
    margin-top: -4px;
    border-radius: 50%;
    background: #eee;
}
.tray {
    display: flex;
    align-items: center;
    gap: 12px;
    padding-right: 14px;
}
.tray-zoom {
    width: 17px;
    height: 17px;
    margin-right: 10px;
    display: flex;
    align-items: center;
    justify-content: center;
    border-radius: 50%;
    background: #4a8cff;
}
.tray-ime { margin-right: 20px; }

/* desktop */
.desktop {
    flex: 1;
    position: relative;
    display: flex;
    background: linear-gradient(172deg, #8f2049 0%, #7a1a5e 30%, #5a0f5c 55%, #3a0540 100%);
}
.dock {
    width: 72px;
    flex: none;
    position: relative;
    display: flex;
    flex-direction: column;
    padding-top: 2px;
    background: rgba(44, 24, 40, 0.96);
}
.dock-item {
    height: 68px;
    flex: none;
    position: relative;
    display: flex;
    align-items: center;
    justify-content: center;
}
.dock-item.is-active {
    height: 64px;
    margin: 2px 4px;
    border-radius: 3px;
    background: rgba(255, 255, 255, 0.2);
}
.running-1::before,
.running-2::before {
    content: "";
    position: absolute;
    left: 4px;
    top: 31px;
    width: 6px;
    height: 6px;
    border-radius: 50%;
    background: #e95420;
}
.is-active.running-1::before { left: 0; top: 29px; }
.running-2::before {
    top: 25px;
    box-shadow: 0 9px 0 #e95420;
}
.dock-t {
    font-family: "Liberation Serif", serif;
    font-size: 28px;
    fill: #333;
    text-anchor: middle;
}
.dock-grid {
    position: absolute;
    left: 21px;
    bottom: 20px;
    width: 30px;
    display: grid;
    grid-template-columns: repeat(3, 6px);
    gap: 5px 6px;
}
.dock-grid i {
    height: 6px;
    border-radius: 2px;
    background: #eee;
}
.desk-icon {
    position: absolute;
    display: flex;
    flex-direction: column;
}
.desk-icon-a { top: 9px; left: 108px; }
.desk-icon-b { top: 109px; left: 115px; }
.desk-shape {
    width: 40px;
    height: 38px;
    border-radius: 4px;
    background: linear-gradient(#7d2a4e 26%, #6e6c6a 26%);
}
.desk-icon-b .desk-shape {
    height: 44px;
    background: #b9b7b3;
}
.desk-label {
    margin-top: 8px;
    padding-left: 4px;
    color: #eee;
    font-size: 15px;
}
.desk-icon-b .desk-label { padding-left: 0; }

/* files window */
.files {
    position: absolute;
    left: 122px;
    top: 0;
    width: 1684px;
    bottom: 0;
    display: flex;
    flex-direction: column;
    border-radius: 10px 10px 0 0;
    box-shadow: 0 0 14px rgba(0, 0, 0, 0.55);
    background: #fff;
    font-size: 14px;
    z-index: 2;
}
.files-head {
    height: 46px;
    box-sizing: border-box;
    flex: none;
    display: flex;
    align-items: center;
    padding-left: 7px;
    border-radius: 10px 10px 0 0;
    border-bottom: 1px solid #1b1a1a;
    background: #312f2f;
    color: #eee;
}
.btn-group { display: flex; }
.hbtn {
    width: 34px;
    height: 34px;
    box-sizing: border-box;
    display: flex;
    align-items: center;
    justify-content: center;
    border: 1px solid #2a2828;
    background: #474543;
}
.btn-group .hbtn:first-child { border-radius: 4px 0 0 4px; }
.btn-group .hbtn:last-child { border-radius: 0 4px 4px 0; border-left: 1px solid #2a2828; }
.pathbar {
    display: flex;
    height: 34px;
    margin-left: 325px;
    width: 840px;
    border-radius: 4px;
}
.crumb-file {
    display: flex;
    align-items: center;
    justify-content: center;
    gap: 14px;
    padding: 0 16px;
    border: 1px solid #2a2828;
    border-right: 0;
    background: #474543;
    font-size: 14px;
}
.crumb-file:first-child { border-radius: 4px 0 0 4px; padding: 0 16px 0 9px; }
.path-rest {
    flex: 1;
    border: 1px solid #1f1e1e;
    border-radius: 0 4px 4px 0;
    background: #353333;
}
.hbtn-search { margin-left: 8px; border-radius: 4px; }
.btn-group-view { margin-left: 157px; }
.hbtn-menu { margin-left: 8px; border-radius: 4px; }
.win-btns {
    margin-left: auto;
    display: flex;
    align-items: center;
}
.win-btns-files {
    margin-left: 0;
    padding-left: 13px;
}
.win-min, .win-max { width: 40px; height: 20px; position: relative; display: block; }
.win-min::after {
    content: "";
    position: absolute;
    left: 14px;
    bottom: 4px;
    width: 9px;
    height: 1.5px;
    background: #eee;
}
.win-max::after {
    content: "";
    position: absolute;
    left: 14px;
    top: 3px;
    width: 7px;
    height: 11px;
    border: 1px solid #eee;
}
.win-close {
    width: 20px;
    height: 20px;
    margin-left: 9px;
    display: flex;
    align-items: center;
    justify-content: center;
    border-radius: 50%;
    background: #e95420;
}
.win-close-grey {
    background: #6a6867;
    margin-right: 10px;
}
.files-body {
    flex: 1;
    display: flex;
    min-height: 0;
}

/* places */
.places {
    width: 188px;
    flex: none;
    padding-top: 3px;
    border-right: 1px solid #e2e2e2;
    background: #f6f6f6;
}
.place {
    height: 38px;
    display: flex;
    align-items: center;
    padding-left: 15px;
    gap: 7px;
    color: #2e3436;
    font-size: 14px;
    white-space: nowrap;
}
.place-dim { color: #9a9a9a; }
.place-accent { color: #ef7a50; }
.pl-ic { width: 16px; height: 16px; flex: none; }
.pl-wide { width: 16px; height: 14px; }
.places-sep {
    height: 1px;
    margin: 4px 0 4px;
    background: #e0e0e0;
}

/* file list */
.file-list {
    flex: 1;
    position: relative;
    background: #fff;
}
.cols {
    height: 26px;
    display: flex;
    align-items: center;
    color: #8a8a8a;
    font-size: 14px;
    font-weight: 500;
}
.col-name {
    flex: 1;
    display: flex;
    align-items: center;
    justify-content: space-between;
    padding-right: 8px;
}
.cols .col-name { padding-left: 7px; }
.col-size {
    width: 80px;
    box-sizing: border-box;
    padding-left: 8px;
}
.col-time {
    width: 87px;
    box-sizing: border-box;
    padding-right: 7px;
    text-align: right;
}
.cols .col-size, .cols .col-time {
    height: 26px;
    line-height: 26px;
    border-left: 1px solid #ececec;
}
.col-sort {
    width: 0;
    height: 0;
    border-left: 6px solid transparent;
    border-right: 6px solid transparent;
    border-top: 7px solid #aaa;
}
.frow {
    height: 46px;
    box-sizing: border-box;
    display: flex;
    align-items: center;
    padding-left: 14px;
    border-bottom: 1px solid #ef7a50;
    background: #e95420;
    color: #fff;
    font-size: 14px;
    white-space: nowrap;
}
.frow:last-of-type { border-bottom: 0; }
.frow .col-name { padding-left: 5px; }
.frow .col-size, .frow .col-time { color: #fbc2aa; }
.f-ic { width: 32px; height: 30px; flex: none; }
.status {
    position: absolute;
    right: 0;
    bottom: 0;
    width: 331px;
    height: 29px;
    box-sizing: border-box;
    padding-left: 13px;
    line-height: 29px;
    background: #f5f5f5;
    border-top: 1px solid #e2e2e2;
    color: #333;
    font-size: 14px;
    white-space: nowrap;
}

/* chrome */
.chrome {
    position: absolute;
    left: 1700px;
    right: 0;
    top: 0;
    bottom: 0;
    display: flex;
    flex-direction: column;
    border-top: 2px solid #6a6967;
    border-right: 3px solid #3e3c3a;
    background: #3e3c3a;
    z-index: 1;
}
.chrome-title {
    height: 41px;
    flex: none;
    display: flex;
    align-items: flex-end;
    position: relative;
}
.tab {
    width: 308px;
    height: 34px;
    position: relative;
    display: flex;
    align-items: center;
    padding-left: 106px;
    box-sizing: border-box;
    border-radius: 0 10px 0 0;
    background: #f6f6f6;
    color: #333;
    font-size: 15px;
}
.tab-text {
    white-space: nowrap;
    -webkit-mask-image: linear-gradient(90deg, #000 85%, transparent);
    mask-image: linear-gradient(90deg, #000 85%, transparent);
}
.tab-close { position: absolute; left: 287px; }
.new-tab { margin: 0 0 10px 15px; }
.chrome-title .win-btns {
    height: 41px;
    margin-top: -3px;
    align-self: flex-start;
}
.chrome-title .win-min::after { background: #bbb; }
.chrome-title .win-max::after { border-color: #bbb; }
.chrome-toolbar {
    height: 38px;
    flex: none;
    display: flex;
    align-items: center;
    box-sizing: border-box;
    padding-left: 106px;
    background: #f6f6f6;
}
.reload { margin-left: 13px; }
.omnibox {
    width: 1268px;
    height: 28px;
    margin-left: 14px;
    display: flex;
    align-items: center;
    padding-left: 11px;
    box-sizing: border-box;
    border-radius: 14px;
    background: #fff;
}
.url {
    margin-left: 6px;
    color: #6b6f73;
    font-size: 14px;
    white-space: nowrap;
}
.url b { font-weight: 400; color: #202124; }
.omni-icons {
    margin-left: auto;
    display: flex;
    gap: 16px;
    padding-right: 9px;
}
.extensions {
    display: grid;
    grid-template-columns: repeat(9, 32.25px);
    justify-items: center;
    align-items: center;
    margin-left: 8px;
}
.ext-x { position: relative; display: flex; }
.ext-x b {
    position: absolute;
    right: -5px;
    bottom: -4px;
    width: 10px;
    height: 11px;
    border-radius: 1px;
    background: #4285f4;
    color: #fff;
    font-size: 9px;
    line-height: 10px;
    text-align: center;
}
.abp {
    font-family: "Liberation Sans", sans-serif;
    font-size: 6px;
    font-weight: 700;
    fill: #fff;
    text-anchor: middle;
}
.cal {
    font-family: "Liberation Sans", sans-serif;
    font-size: 10px;
    fill: #1a73e8;
    text-anchor: middle;
}
.ga {
    font-size: 8px;
    fill: #fff;
    text-anchor: middle;
}
.bookmarks {
    height: 31px;
    flex: none;
    display: flex;
    align-items: center;
    gap: 16px;
    box-sizing: border-box;
    padding-left: 74px;
    border-bottom: 1px solid #c4c4c4;
    background: #f6f6f6;
    color: #444;
    font-size: 15px;
    white-space: nowrap;
}
.bm {
    display: flex;
    align-items: center;
    gap: 8px;
}
.bm-ic { width: 16px; height: 16px; fill: #757575; }
.bm-naver { margin-left: 12px; }

/* drive page */
.drive {
    flex: 1;
    display: flex;
    flex-direction: column;
    min-height: 0;
    background: #fff;
    color: #5f6368;
    font-family: Roboto, "Noto Sans CJK KR", sans-serif;
}
.drive-top {
    height: 129px;
    flex: none;
    display: flex;
    align-items: center;
    box-sizing: border-box;
    border-bottom: 2px solid #dadce0;
}
.brand {
    width: 572px;
    flex: none;
    display: flex;
    align-items: center;
    gap: 21px;
    padding-left: 103px;
    box-sizing: border-box;
}
.brand-name {
    font-size: 44px;
    color: #5f6368;
}
.searchbox {
    width: 998px;
    height: 96px;
    flex: none;
    display: flex;
    align-items: center;
    box-sizing: border-box;
    padding: 0 48px 0 33px;
    border-radius: 12px;
    background: #f1f3f4;
}
.search-text {
    margin-left: 33px;
    font-size: 32px;
    color: #70757a;
}
.search-drop {
    margin-left: auto;
    width: 0;
    height: 0;
    border-left: 10px solid transparent;
    border-right: 10px solid transparent;
    border-top: 10px solid #5f6368;
}
.top-actions {
    display: flex;
    gap: 42px;
    padding-left: 42px;
    overflow: hidden;
    white-space: nowrap;
}
.top-actions svg { flex: none; }
.help {
    font-size: 26px;
    font-weight: 500;
    fill: #5f6368;
    text-anchor: middle;
}
.drive-body {
    flex: 1;
    display: flex;
    min-height: 0;
}
.drive-side {
    width: 572px;
    flex: none;
    box-sizing: border-box;
    padding-left: 106px;
    font-weight: 500;
    font-size: 25px;
    letter-spacing: 0.4px;
}
.new-btn {
    width: 262px;
    height: 96px;
    margin: 26px 0 22px -46px;
    display: flex;
    align-items: center;
    box-sizing: border-box;
    padding-left: 54px;
    gap: 39px;
    border-radius: 48px;
    background: #fff;
    box-shadow: 0 2px 6px rgba(60, 64, 67, 0.4);
    color: #3c4043;
    font-size: 28px;
}
.new-label { margin-top: -3px; }
.nav-item {
    height: 80px;
    display: flex;
    align-items: center;
    padding-left: 97px;
    position: relative;
    white-space: nowrap;
}
.nav-ic {
    position: absolute;
    left: 8px;
    width: 48px;
    height: 48px;
}
.nav-sub {
    height: 64px;
    font-weight: 400;
    padding-left: 121px;
}
.sub-arrow {
    position: absolute;
    left: 30px;
    width: 0;
    height: 0;
    border-top: 10px solid transparent;
    border-bottom: 10px solid transparent;
    border-left: 10px solid #5f6368;
}
.sub-ic { position: absolute; left: 56px; }
.side-sep {
    height: 2px;
    width: 434px;
    margin: 17px 0 15px;
    background: #dadce0;
}
.usage {
    height: 62px;
    line-height: 62px;
    padding-left: 97px;
    font-weight: 400;
}
.usage-bar {
    width: 338px;
    height: 6px;
    margin: 0 0 0 96px;
    background: #e0e0e0;
}
.usage-fill {
    height: 100%;
    background: #4285f4;
}
.buy {
    margin-top: 50px;
    padding-left: 97px;
    line-height: 28px;
    letter-spacing: 1.2px;
    color: #1a73e8;
}
.drive-main {
    flex: 1;
    position: relative;
    min-width: 0;
}
.crumbs {
    height: 95px;
    box-sizing: border-box;
    display: flex;
    align-items: center;
    padding: 0 0 3px 20px;
    border-bottom: 2px solid #dadce0;
    color: #3c4043;
    font-size: 36.5px;
    white-space: nowrap;
    margin-bottom: 2px;
}
.crumb-long { width: 222px; }
.chev { margin: 0 34px; flex: none; }
.chev-last { margin-right: 0; }
.crumb-tools {
    display: flex;
    align-items: center;
    gap: 47px;
    margin-left: 26px;
    position: relative;
}
.tools-line {
    position: absolute;
    left: 376px;
    top: -8px;
    width: 2px;
    height: 64px;
    background: #e8eaed;
}
.list-head {
    height: 97px;
    box-sizing: border-box;
    padding: 14px 0 0 14px;
    display: flex;
    align-items: center;
    gap: 18px;
    border-bottom: 2px solid #dadce0;
    font-size: 25px;
    font-weight: 500;
}
.row {
    height: 96px;
    box-sizing: border-box;
    display: flex;
    align-items: center;
    padding: 0 0 0 116px;
    position: relative;
    border-bottom: 2px solid #e8eaed;
    color: #3c4043;
    font-size: 26px;
    font-weight: 500;
}
.row-ic {
    position: absolute;
    left: 37px;
    width: 48px;
    height: 48px;
    fill: #5f6368;
}
.row-doc { position: absolute; left: 48px; }
.row-people { margin-left: 14px; }
.row-selected {
    height: 91px;
    margin: 2px 0 3px 2px;
    padding: 0 0 0 110px;
    border: 4px solid #4285f4;
    background: #e8f0fe;
    color: #1967d2;
    box-shadow: 0 3px 4px rgba(60, 64, 67, 0.12);
}
.row-selected .row-ic { left: 31px; }
.row-muted { color: #8d8d8d; }
.drag-folder {
    position: absolute;
    left: 144px;
    top: 648px;
    width: 32px;
    height: 30px;
}
.drop-hint {
    position: absolute;
    left: 52px;
    bottom: 46px;
    width: 548px;
    display: flex;
    flex-direction: column;
    align-items: center;
    gap: 28px;
}
.drop-cloud { filter: drop-shadow(0 5px 8px rgba(60, 64, 67, 0.28)); }
.drop-box {
    width: 100%;
    height: 144px;
    display: flex;
    flex-direction: column;
    align-items: center;
    justify-content: center;
    gap: 24px;
    border-radius: 3px;
    background: #4285f4;
    box-shadow: 0 3px 10px rgba(60, 64, 67, 0.4);
    color: #fff;
}
.drop-line {
    font-size: 28.5px;
    font-weight: 300;
}
.drop-target {
    display: flex;
    align-items: center;
    gap: 15px;
    font-size: 28px;
    font-weight: 500;
}
.drop-target svg { fill: #fff; }
.hscroll {
    height: 26px;
    box-sizing: border-box;
    flex: none;
    margin-bottom: 4px;
    border-top: 2px solid #e0e0e0;
    background: #f1f1f1;
}
.hscroll-thumb {
    width: 1461px;
    height: 20px;
    margin-top: 2px;
    background: #c1c1c1;
    border-top: 2px solid #a8a8a8;
    box-sizing: border-box;
}
```
